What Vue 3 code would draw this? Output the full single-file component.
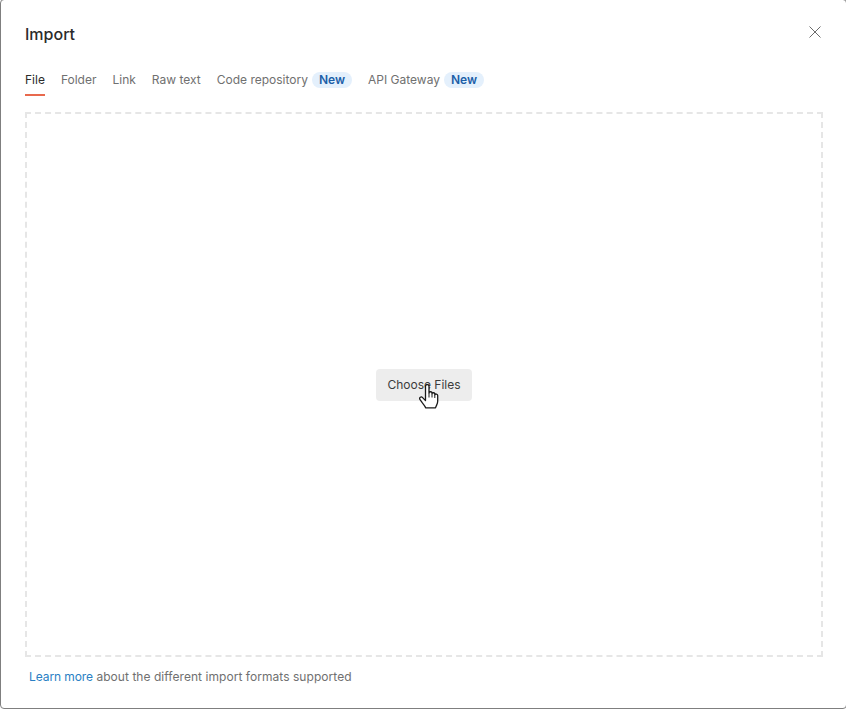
<script setup>
const tabs = [
  { label: 'File', active: true },
  { label: 'Folder' },
  { label: 'Link' },
  { label: 'Raw text' },
  { label: 'Code repository', badge: 'New' },
  { label: 'API Gateway', badge: 'New' }
]
</script>

<template>
  <div class="page">
    <div class="modal">
      <header class="head">
        <h1 class="title">Import</h1>
        <svg class="close" width="12" height="12" viewBox="0 0 12 12" fill="none" stroke="#6b6b6b" stroke-width="1">
          <path d="M0.5 0.5 11.5 11.5M11.5 0.5 0.5 11.5" />
        </svg>
      </header>
      <nav class="tabs">
        <div v-for="t in tabs" :key="t.label" class="tab" :class="{ active: t.active }">
          <span>{{ t.label }}</span>
          <span v-if="t.badge" class="badge">{{ t.badge }}</span>
        </div>
      </nav>
      <div class="drop">
        <div class="btn-wrap">
          <button class="btn">Choose Files</button>
          <svg class="cursor" width="20" height="26" viewBox="0 0 20 26">
            <path d="M6.5 2.2c0-2.2 3.5-2.2 3.5 0v6.600c.3-1.500 3-1.400 3 .3v.6c.3-1.400 2.800-1.300 2.800.4v.7c.4-1.200 2.900-1.100 2.900.8v5.700c0 2.600-1.400 4-2.200 6.600H6.800c-.8-2-2-3.200-3.600-5.200L.9 15.400c-1-1.900 1.300-3.300 2.700-1.800l2.900 3z" fill="#fff" stroke="#1a1a1a" stroke-width="1.300" stroke-linejoin="round" />
            <path d="M10 9v4.500M13 10v3.500M15.800 11v3" fill="none" stroke="#1a1a1a" stroke-width="1" />
          </svg>
        </div>
      </div>
      <p class="foot"><a class="link">Learn more</a> <span class="rest">about the different import formats supported</span></p>
    </div>
  </div>
</template>

<style scoped>
.page {
  width: 846px;
  height: 709px;
  overflow: hidden;
}
.modal {
  box-sizing: border-box;
  width: 847px;
  height: 710px;
  margin-top: -1px;
  padding: 0 23px 0 24px;
  background: #fff;
  border: 1px solid #7f7f7f;
  border-radius: 4px;
  font-family: Inter, "Liberation Sans", sans-serif;
  font-size: 12px;
  color: #707070;
  display: flex;
  flex-direction: column;
}
.head {
  display: flex;
  justify-content: space-between;
  align-items: center;
  height: 67px;
}
.title {
  margin: 0;
  font-size: 16px;
  line-height: 20px;
  font-weight: 500;
  color: #2b2b2b;
}
.close {
  margin-right: 2px;
  margin-top: -3px;
}
.tabs {
  display: flex;
  gap: 16px;
  height: 28px;
  margin-top: 2px;
}
.tab {
  display: flex;
  align-items: flex-start;
  gap: 4px;
  box-sizing: border-box;
  height: 27px;
  padding-top: 3px;
  border-bottom: 2px solid transparent;
}
.tab.active {
  color: #2b2b2b;
  border-bottom-color: #e8694d;
}
.badge {
  padding: 0 7px;
  line-height: 16px;
  border-radius: 8px;
  background: #e4f0fc;
  color: #1c5fa8;
  font-weight: 600;
}
.drop {
  margin-top: 15px;
  height: 545px;
  box-sizing: border-box;
  border: 2px dashed #e6e6e6;
  display: flex;
  align-items: center;
  justify-content: center;
}
.btn-wrap {
  position: relative;
}
.btn {
  display: block;
  width: 96px;
  height: 32px;
  padding: 0;
  border: 0;
  border-radius: 4px;
  background: #ededed;
  color: #3c3c3c;
  font: inherit;
}
.cursor {
  position: absolute;
  left: 43px;
  top: 15px;
}
.foot {
  margin: 12px 0 0 4px;
  line-height: 16px;
}
.link {
  color: #2a7fc4;
  letter-spacing: -0.08px;
}
.rest {
  letter-spacing: 0.05px;
}
</style>
